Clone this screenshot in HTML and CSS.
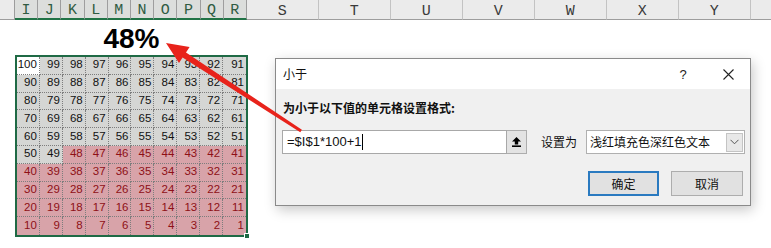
FILE: index.html
```html
<!DOCTYPE html>
<html>
<head>
<meta charset="utf-8">
<link rel="stylesheet" href="styles.css">
</head>
<body>
<div class="colhdr">
  <div class="hc lead"></div>
  <div class="hc sel">I</div><div class="hc sel">J</div><div class="hc sel">K</div><div class="hc sel">L</div><div class="hc sel">M</div>
  <div class="hc sel">N</div><div class="hc sel">O</div><div class="hc sel">P</div><div class="hc sel">Q</div><div class="hc sel">R</div>
  <div class="hc wide">S</div><div class="hc wide">T</div><div class="hc wide">U</div><div class="hc wide">V</div>
  <div class="hc wide">W</div><div class="hc wide">X</div><div class="hc wide">Y</div><div class="hc tail"></div>
</div>
<div class="content">
  <div class="left">
    <div class="pct">48%</div>
    <div class="sheet">
      <div class="grid">
        <div class="cell a">100</div><div class="cell">99</div><div class="cell">98</div><div class="cell">97</div><div class="cell">96</div><div class="cell">95</div><div class="cell">94</div><div class="cell">93</div><div class="cell">92</div><div class="cell">91</div>
        <div class="cell">90</div><div class="cell">89</div><div class="cell">88</div><div class="cell">87</div><div class="cell">86</div><div class="cell">85</div><div class="cell">84</div><div class="cell">83</div><div class="cell">82</div><div class="cell">81</div>
        <div class="cell">80</div><div class="cell">79</div><div class="cell">78</div><div class="cell">77</div><div class="cell">76</div><div class="cell">75</div><div class="cell">74</div><div class="cell">73</div><div class="cell">72</div><div class="cell">71</div>
        <div class="cell">70</div><div class="cell">69</div><div class="cell">68</div><div class="cell">67</div><div class="cell">66</div><div class="cell">65</div><div class="cell">64</div><div class="cell">63</div><div class="cell">62</div><div class="cell">61</div>
        <div class="cell">60</div><div class="cell">59</div><div class="cell">58</div><div class="cell">57</div><div class="cell">56</div><div class="cell">55</div><div class="cell">54</div><div class="cell">53</div><div class="cell">52</div><div class="cell">51</div>
        <div class="cell">50</div><div class="cell">49</div><div class="cell r">48</div><div class="cell r">47</div><div class="cell r">46</div><div class="cell r">45</div><div class="cell r">44</div><div class="cell r">43</div><div class="cell r">42</div><div class="cell r">41</div>
        <div class="cell r">40</div><div class="cell r">39</div><div class="cell r">38</div><div class="cell r">37</div><div class="cell r">36</div><div class="cell r">35</div><div class="cell r">34</div><div class="cell r">33</div><div class="cell r">32</div><div class="cell r">31</div>
        <div class="cell r">30</div><div class="cell r">29</div><div class="cell r">28</div><div class="cell r">27</div><div class="cell r">26</div><div class="cell r">25</div><div class="cell r">24</div><div class="cell r">23</div><div class="cell r">22</div><div class="cell r">21</div>
        <div class="cell r">20</div><div class="cell r">19</div><div class="cell r">18</div><div class="cell r">17</div><div class="cell r">16</div><div class="cell r">15</div><div class="cell r">14</div><div class="cell r">13</div><div class="cell r">12</div><div class="cell r">11</div>
        <div class="cell r">10</div><div class="cell r">9</div><div class="cell r">8</div><div class="cell r">7</div><div class="cell r">6</div><div class="cell r">5</div><div class="cell r">4</div><div class="cell r">3</div><div class="cell r">2</div><div class="cell r">1</div>
      </div>
      <div class="handle"></div>
    </div>
  </div>

  <div class="dlg">
    <div class="dlg-title">
      <span class="ttl">小于</span>
      <span class="help">?</span>
      <span class="close"><svg width="11" height="11" viewBox="0 0 11 11"><path d="M0.5 0.5 L10.5 10.5 M10.5 0.5 L0.5 10.5" stroke="#222" stroke-width="1.1" fill="none"/></svg></span>
    </div>
    <div class="dlg-body">
      <div class="lbl">为小于以下值的单元格设置格式:</div>
      <div class="row">
        <div class="inp"><span class="formula">=$I$1*100+1</span><span class="caret"></span></div>
        <div class="upbtn"><svg width="9" height="10" viewBox="0 0 9 10"><path d="M4.5 0 L9 4.6 L6.2 4.6 L6.2 7.4 L2.8 7.4 L2.8 4.6 L0 4.6 Z" fill="#000"/><rect x="0" y="8.4" width="9" height="1.6" fill="#000"/></svg></div>
        <span class="setas">设置为</span>
        <div class="sel-box">
          <span class="sel-text">浅红填充色深红色文本</span>
          <span class="sel-arrow"><svg width="9" height="6" viewBox="0 0 9 6"><path d="M0.5 0.8 L4.5 4.8 L8.5 0.8" stroke="#555" stroke-width="1" fill="none"/></svg></span>
        </div>
      </div>
      <div class="btns">
        <div class="btn ok">确定</div>
        <div class="btn">取消</div>
      </div>
    </div>
  </div>
</div>

<svg class="arrow" width="771" height="248" viewBox="0 0 771 248">
  <polygon points="166,43 179,63 182.6,57.6 300.3,132.3 301.9,129.8 186,52.4 189.6,47" fill="#e8231b"/>
</svg>
</body>
</html>
```

FILE: styles.css
```css
* { box-sizing: border-box; }
html, body { margin: 0; padding: 0; }
body {
  width: 771px;
  height: 248px;
  overflow: hidden;
  position: relative;
  background: #fff;
  font-family: "Liberation Sans", "Noto Sans CJK SC", sans-serif;
}

/* column header */
.colhdr {
  display: flex;
  height: 20px;
}
.hc {
  flex: none;
  height: 20px;
  padding-top: 3px;
  display: flex;
  align-items: center;
  justify-content: center;
  font-family: "Liberation Mono", monospace;
  font-size: 15px;
  background: #ebebeb;
  border-right: 1px solid #c3c3c3;
  border-bottom: 1px solid #9d9d9d;
  color: #3a3a3a;
}
.hc.lead { width: 15px; border-right: 1px solid #9c9c9c; }
.hc.sel {
  width: 23.2px;
  background: #dcdedc;
  color: #2f5b42;
  border-right: 1px solid #9e9e9e;
  border-bottom: 2px solid #217346;
}
.hc.wide { width: 72px; }
.hc.tail { width: 30px; border-right: none; }

/* main content */
.content {
  display: flex;
  align-items: flex-start;
}
.left {
  width: 248px;
  padding-left: 15px;
  flex: none;
}
.pct {
  height: 35px;
  padding-top: 1px;
  line-height: 35px;
  text-align: center;
  font-size: 28px;
  font-weight: bold;
  color: #000;
}
.sheet {
  position: relative;
  width: 233px;
  border: 2px solid #1f6a45;
}
.grid {
  display: grid;
  grid-template-columns: repeat(10, 1fr);
  grid-auto-rows: 17.8px;
}
.cell {
  display: flex;
  align-items: center;
  justify-content: flex-end;
  padding: 0 2px 2px 0;
  font-size: 11.5px;
  color: #111;
  background: #d5d6d4;
  border-right: 1px dotted #7d7d7d;
  border-bottom: 1px dotted #7d7d7d;
}
.cell:nth-child(10n) { border-right: none; }
.cell:nth-child(n+91) { border-bottom: none; }
.cell.a { background: #fff; }
.cell.r { background: #d8a3a9; color: #8e1016; }
.handle {
  position: absolute;
  right: -4px;
  bottom: -4px;
  width: 6px;
  height: 6px;
  background: #1f6a45;
  border: 1px solid #fff;
}

/* dialog */
.dlg {
  flex: none;
  margin-left: 27px;
  margin-top: 38px;
  width: 476px;
  height: 148px;
  border: 1px solid #8a8a8a;
  background: #f0f0f0;
  box-shadow: 2px 4px 12px rgba(0, 0, 0, 0.22);
  font-family: "Noto Sans CJK SC", "Liberation Sans", sans-serif;
  font-size: 12px;
  color: #111;
}
.dlg-title {
  height: 30px;
  background: #fff;
  display: flex;
  align-items: center;
  padding-left: 7px;
  padding-right: 12px;
}
.ttl { flex: 1; line-height: 16px; }
.help {
  width: 20px;
  text-align: center;
  font-family: "Liberation Sans", sans-serif;
  font-size: 13px;
  color: #222;
}
.close {
  width: 20px;
  margin-left: 25px;
  display: flex;
  justify-content: center;
}
.close svg { display: block; }
.dlg-body {
  padding: 11px 0 0 6px;
}
.lbl {
  font-weight: bold;
  line-height: 16px;
  padding-left: 1px;
}
.row {
  margin-top: 14px;
  display: flex;
  align-items: center;
  height: 24px;
}
.row > * { flex: none; white-space: nowrap; }
.inp {
  width: 225px;
  height: 24px;
  background: #fff;
  border: 1px solid #a8a8a8;
  display: flex;
  align-items: center;
  padding-left: 4px;
}
.formula {
  font-family: "Liberation Sans", sans-serif;
  font-size: 13px;
  line-height: 16px;
}
.caret {
  width: 1px;
  height: 16px;
  background: #000;
  margin-left: 1px;
}
.upbtn {
  width: 20px;
  height: 24px;
  background: #e3e3e3;
  border: 1px solid #adadad;
  border-left: none;
  display: flex;
  align-items: center;
  justify-content: center;
}
.upbtn svg { display: block; }
.setas {
  margin-left: 14px;
  line-height: 16px;
}
.sel-box {
  margin-left: 9px;
  width: 159px;
  height: 24px;
  background: #fff;
  border: 1px solid #b0b0b0;
  display: flex;
  align-items: center;
  padding-left: 3px;
  padding-right: 1px;
}
.sel-text { flex: 1; line-height: 16px; }
.sel-arrow {
  width: 17px;
  height: 19px;
  background: #e8e8e8;
  border: 1px solid #c4c4c4;
  display: flex;
  align-items: center;
  justify-content: center;
}
.sel-arrow svg { display: block; }
.btns {
  margin-top: 17px;
  display: flex;
  justify-content: flex-end;
  gap: 12px;
  padding-right: 7px;
}
.btn {
  width: 72px;
  height: 25px;
  background: #e1e1e1;
  border: 1px solid #adadad;
  display: flex;
  align-items: center;
  justify-content: center;
  line-height: 16px;
}
.btn.ok {
  width: 71px;
  border: 2px solid #2a7ac0;
}

/* annotation arrow overlay */
.arrow {
  position: absolute;
  left: 0;
  top: 0;
  pointer-events: none;
}
```
